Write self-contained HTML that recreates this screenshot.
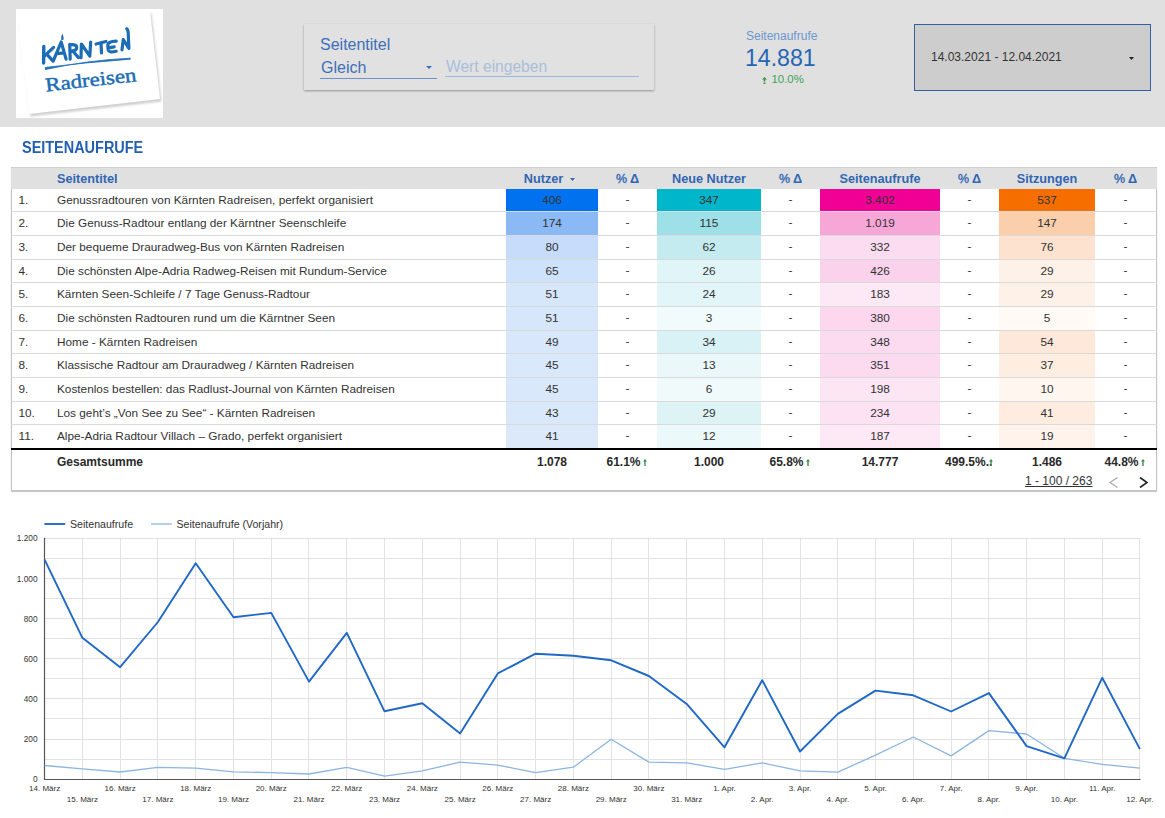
<!DOCTYPE html>
<html><head><meta charset="utf-8">
<style>
html,body{margin:0;padding:0;}
body{width:1165px;height:818px;overflow:hidden;position:relative;background:#fff;font-family:"Liberation Sans",sans-serif;}
.abs{position:absolute;}
#hdr{position:absolute;left:0;top:0;width:1165px;height:127px;background:#e0e0e0;}
#logo{position:absolute;left:16px;top:9px;width:147px;height:109px;background:#fff;}
#filter{position:absolute;left:304px;top:24px;width:350px;height:66px;background:#e1e1e1;box-shadow:0 1px 2px rgba(0,0,0,0.35);}
.ftxt{position:absolute;font-size:16px;color:#3d6fb8;white-space:nowrap;line-height:1;}
#date{position:absolute;left:914px;top:24px;width:235px;height:65px;background:#cdcdcd;border:1px solid #3460a3;}
.c{position:absolute;font-size:11.8px;line-height:22.67px;text-align:center;color:#333;white-space:nowrap;overflow:hidden;}
.c.l{text-align:left;}
.c.dash{line-height:20.6px;}
.c.idx{padding-left:7.5px;width:38px !important;}
.rowline{position:absolute;left:11px;width:1146px;height:1px;background:#dadada;}
.hd{position:absolute;top:168px;height:22px;line-height:22px;font-size:12.7px;font-weight:bold;color:#3166b3;white-space:nowrap;text-align:center;}
.tot{position:absolute;top:452px;line-height:20px;font-size:12px;font-weight:bold;color:#2a2a2a;white-space:nowrap;text-align:center;}
.pc{font-weight:normal;font-size:12.4px;-webkit-text-stroke:0.35px currentColor;}
.up{display:inline-block;vertical-align:0px;margin-left:4px;position:relative;left:-1.5px;}
svg text.ax{font-family:"Liberation Sans",sans-serif;font-size:8px;fill:#333;}
svg text.ay{font-family:"Liberation Sans",sans-serif;font-size:8.3px;fill:#333;}
svg text.lg{font-family:"Liberation Sans",sans-serif;font-size:10.6px;fill:#333;}
</style></head>
<body>
<div id="hdr"></div>
<div id="logo">
<svg width="147" height="109" viewBox="0 0 147 109">
 <defs><filter id="sh" x="-10%" y="-10%" width="120%" height="130%"><feGaussianBlur stdDeviation="1.2"/></filter></defs>
 <g transform="translate(-16,-9)">
  <polygon points="19,25 151,12 161,100 30,115" fill="#cfcfcf" filter="url(#sh)" transform="translate(0.5,1.5)"/>
  <polygon points="18,24 150,11 160,99 29,114" fill="#fff"/>
  <g fill="none" stroke="#1c6db5" stroke-linecap="round" stroke-linejoin="round" stroke-width="3.2">
   <path d="M43.8 46.4 L43.6 63" stroke-width="3.4"/>
   <path d="M44.3 56.2 L53.6 47.4 M46.7 54.2 L53.1 61.1"/>
   <path d="M53.6 60.1 L61.2 42 L66.1 59.1 M57 53.7 L64.3 52.8"/>
   <path d="M69.7 44.4 L70.2 59.1 M69.7 44.9 Q77.5 43.8 76.6 48.5 Q75.5 51 70.7 51.3 M72.6 50.8 L78.5 57.6"/>
   <path d="M81 57.6 L81.4 44 L89.8 56.2 L90.7 42"/>
   <path d="M96.1 44 L105.9 41.5 M101 43 L101.5 52.8"/>
   <path d="M116.2 41.2 Q108 41.5 107.8 45 L108.2 50 Q108.8 53 116.2 51.3 M108.5 47.9 L114.2 46.9"/>
   <path d="M122 49.8 L123.3 39.5 L128.9 48.4 L128.2 33 Q128 29.5 126.8 28.8"/>
  </g>
  <path d="M62.2 33.6 Q64.3 38 63.3 40 L61.3 40 Q60.5 38 62.2 33.6Z" fill="#1c6db5"/>
  <path d="M45.3 69.6 Q87.8 60 130.3 58.2 L130.3 59.2 Q87.8 62.3 45.3 67.4 Z" fill="#1c6db5" stroke="#1c6db5" stroke-width="0.8" stroke-linejoin="round"/>
  <g transform="rotate(-6.4 46 91.4)">
   <text x="46" y="91.4" font-family="Liberation Serif" font-size="19.5" fill="#1c6db5" stroke="#1c6db5" stroke-width="0.45" textLength="91.5" lengthAdjust="spacingAndGlyphs">Radreisen</text>
  </g>
 </g>
</svg>
</div>

<div id="filter">
 <div class="ftxt" style="left:16px;top:13px;">Seitentitel</div>
 <div class="ftxt" style="left:17px;top:36px;">Gleich</div>
 <div class="abs" style="left:16px;top:54px;width:117px;height:1px;background:#6f93c9;"></div>
 <svg class="abs" style="left:122px;top:42px" width="6" height="4"><path d="M0 0 L6 0 L3 3 Z" fill="#3d6fb8"/></svg>
 <div class="ftxt" style="left:142px;top:35px;color:#a9bfdc;font-size:15.6px;">Wert eingeben</div>
 <div class="abs" style="left:141px;top:52px;width:194px;height:1px;background:#9fb7d8;"></div>
</div>

<div class="abs" style="left:746px;top:30px;font-size:12px;color:#6b97d0;white-space:nowrap;line-height:1;">Seitenaufrufe</div>
<div class="abs" style="left:745px;top:47px;font-size:23.1px;color:#2465b5;white-space:nowrap;line-height:1;">14.881</div>
<svg class="abs" style="left:761.5px;top:77px" width="5" height="7" viewBox="0 0 5 7"><path d="M2.5 0 L5 2.6 L3.3 2.6 L3.3 4.6 L1.7 4.6 L1.7 2.6 L0 2.6Z M1.5 5.6 H3.5 V7 H1.5Z" fill="#3d8f4f"/></svg>
<div class="abs" style="left:771.5px;top:74px;font-size:11.4px;color:#43a058;white-space:nowrap;line-height:1;">10.0%</div>

<div id="date">
 <div class="abs" style="left:16px;top:26px;font-size:12px;color:#333;white-space:nowrap;line-height:1;">14.03.2021 - 12.04.2021</div>
 <svg class="abs" style="left:214px;top:32px" width="5" height="3"><path d="M0 0 L5 0 L2.5 3 Z" fill="#222"/></svg>
</div>

<div class="abs" style="left:22px;top:140px;font-size:16px;font-weight:bold;color:#2361b0;white-space:nowrap;line-height:1;transform:scaleX(0.903);transform-origin:left top;">SEITENAUFRUFE</div>

<!-- table -->
<div class="abs" style="left:11px;top:167px;width:1146px;height:324px;border:1px solid #c2c2c2;border-top:none;box-sizing:border-box;box-shadow:0 1px 1px rgba(0,0,0,0.2);"></div>
<div class="abs" style="left:11px;top:167px;width:1146px;height:22px;background:#e0e0e0;border-top:1px solid #cfcfcf;box-sizing:border-box;"></div>
<div class="hd" style="left:57px;">Seitentitel</div>
<div class="hd" style="left:504px;width:92px;"><span style="position:relative;left:-1px">Nutzer</span><svg width="5" height="3" style="vertical-align:2px;margin-left:6px"><path d="M0 0 L5 0 L2.5 3Z" fill="#3166b3"/></svg></div>
<div class="hd" style="left:598px;width:59px;"><span class="pc">%</span> Δ</div>
<div class="hd" style="left:657px;width:104px;">Neue Nutzer</div>
<div class="hd" style="left:761px;width:59px;"><span class="pc">%</span> Δ</div>
<div class="hd" style="left:820px;width:120px;">Seitenaufrufe</div>
<div class="hd" style="left:940px;width:59px;"><span class="pc">%</span> Δ</div>
<div class="hd" style="left:999px;width:96px;">Sitzungen</div>
<div class="hd" style="left:1095px;width:61px;"><span class="pc">%</span> Δ</div>
<div class="rowline" style="top:211.27px"></div>
<div class="c l idx" style="left:11px;top:188.60px;width:46px;height:22.67px;">1.</div>
<div class="c l" style="left:57px;top:188.60px;width:449px;height:22.67px;">Genussradtouren von Kärnten Radreisen, perfekt organisiert</div>
<div class="c " style="left:506px;top:188.60px;width:92px;height:22.67px;background:#0072f0;">406</div>
<div class="c dash" style="left:598px;top:188.60px;width:59px;height:22.67px;">-</div>
<div class="c " style="left:657px;top:188.60px;width:104px;height:22.67px;background:#00b6cb;">347</div>
<div class="c dash" style="left:761px;top:188.60px;width:59px;height:22.67px;">-</div>
<div class="c " style="left:820px;top:188.60px;width:120px;height:22.67px;background:#f10096;">3.402</div>
<div class="c dash" style="left:940px;top:188.60px;width:59px;height:22.67px;">-</div>
<div class="c " style="left:999px;top:188.60px;width:96px;height:22.67px;background:#f66d00;">537</div>
<div class="c dash" style="left:1095px;top:188.60px;width:61px;height:22.67px;">-</div>
<div class="rowline" style="top:234.94px"></div>
<div class="c l idx" style="left:11px;top:212.27px;width:46px;height:22.67px;">2.</div>
<div class="c l" style="left:57px;top:212.27px;width:449px;height:22.67px;">Die Genuss-Radtour entlang der Kärntner Seenschleife</div>
<div class="c " style="left:506px;top:212.27px;width:92px;height:22.67px;background:#8ab9f6;">174</div>
<div class="c dash" style="left:598px;top:212.27px;width:59px;height:22.67px;">-</div>
<div class="c " style="left:657px;top:212.27px;width:104px;height:22.67px;background:#9de0e8;">115</div>
<div class="c dash" style="left:761px;top:212.27px;width:59px;height:22.67px;">-</div>
<div class="c " style="left:820px;top:212.27px;width:120px;height:22.67px;background:#f7a6d8;">1.019</div>
<div class="c dash" style="left:940px;top:212.27px;width:59px;height:22.67px;">-</div>
<div class="c " style="left:999px;top:212.27px;width:96px;height:22.67px;background:#fbcfac;">147</div>
<div class="c dash" style="left:1095px;top:212.27px;width:61px;height:22.67px;">-</div>
<div class="rowline" style="top:258.61px"></div>
<div class="c l idx" style="left:11px;top:235.94px;width:46px;height:22.67px;">3.</div>
<div class="c l" style="left:57px;top:235.94px;width:449px;height:22.67px;">Der bequeme Drauradweg-Bus von Kärnten Radreisen</div>
<div class="c " style="left:506px;top:235.94px;width:92px;height:22.67px;background:#c6dcfa;">80</div>
<div class="c dash" style="left:598px;top:235.94px;width:59px;height:22.67px;">-</div>
<div class="c " style="left:657px;top:235.94px;width:104px;height:22.67px;background:#c4ecf0;">62</div>
<div class="c dash" style="left:761px;top:235.94px;width:59px;height:22.67px;">-</div>
<div class="c " style="left:820px;top:235.94px;width:120px;height:22.67px;background:#fcdcf0;">332</div>
<div class="c dash" style="left:940px;top:235.94px;width:59px;height:22.67px;">-</div>
<div class="c " style="left:999px;top:235.94px;width:96px;height:22.67px;background:#fde3cf;">76</div>
<div class="c dash" style="left:1095px;top:235.94px;width:61px;height:22.67px;">-</div>
<div class="rowline" style="top:282.28px"></div>
<div class="c l idx" style="left:11px;top:259.61px;width:46px;height:22.67px;">4.</div>
<div class="c l" style="left:57px;top:259.61px;width:449px;height:22.67px;">Die schönsten Alpe-Adria Radweg-Reisen mit Rundum-Service</div>
<div class="c " style="left:506px;top:259.61px;width:92px;height:22.67px;background:#cfe2fb;">65</div>
<div class="c dash" style="left:598px;top:259.61px;width:59px;height:22.67px;">-</div>
<div class="c " style="left:657px;top:259.61px;width:104px;height:22.67px;background:#e0f5f7;">26</div>
<div class="c dash" style="left:761px;top:259.61px;width:59px;height:22.67px;">-</div>
<div class="c " style="left:820px;top:259.61px;width:120px;height:22.67px;background:#fbd2ec;">426</div>
<div class="c dash" style="left:940px;top:259.61px;width:59px;height:22.67px;">-</div>
<div class="c " style="left:999px;top:259.61px;width:96px;height:22.67px;background:#fef1e7;">29</div>
<div class="c dash" style="left:1095px;top:259.61px;width:61px;height:22.67px;">-</div>
<div class="rowline" style="top:305.95px"></div>
<div class="c l idx" style="left:11px;top:283.28px;width:46px;height:22.67px;">5.</div>
<div class="c l" style="left:57px;top:283.28px;width:449px;height:22.67px;">Kärnten Seen-Schleife / 7 Tage Genuss-Radtour</div>
<div class="c " style="left:506px;top:283.28px;width:92px;height:22.67px;background:#d6e6fb;">51</div>
<div class="c dash" style="left:598px;top:283.28px;width:59px;height:22.67px;">-</div>
<div class="c " style="left:657px;top:283.28px;width:104px;height:22.67px;background:#e2f5f8;">24</div>
<div class="c dash" style="left:761px;top:283.28px;width:59px;height:22.67px;">-</div>
<div class="c " style="left:820px;top:283.28px;width:120px;height:22.67px;background:#fde8f5;">183</div>
<div class="c dash" style="left:940px;top:283.28px;width:59px;height:22.67px;">-</div>
<div class="c " style="left:999px;top:283.28px;width:96px;height:22.67px;background:#fef1e7;">29</div>
<div class="c dash" style="left:1095px;top:283.28px;width:61px;height:22.67px;">-</div>
<div class="rowline" style="top:329.62px"></div>
<div class="c l idx" style="left:11px;top:306.95px;width:46px;height:22.67px;">6.</div>
<div class="c l" style="left:57px;top:306.95px;width:449px;height:22.67px;">Die schönsten Radtouren rund um die Kärntner Seen</div>
<div class="c " style="left:506px;top:306.95px;width:92px;height:22.67px;background:#d6e6fb;">51</div>
<div class="c dash" style="left:598px;top:306.95px;width:59px;height:22.67px;">-</div>
<div class="c " style="left:657px;top:306.95px;width:104px;height:22.67px;background:#f2fbfc;">3</div>
<div class="c dash" style="left:761px;top:306.95px;width:59px;height:22.67px;">-</div>
<div class="c " style="left:820px;top:306.95px;width:120px;height:22.67px;background:#fcd7ee;">380</div>
<div class="c dash" style="left:940px;top:306.95px;width:59px;height:22.67px;">-</div>
<div class="c " style="left:999px;top:306.95px;width:96px;height:22.67px;background:#fffaf6;">5</div>
<div class="c dash" style="left:1095px;top:306.95px;width:61px;height:22.67px;">-</div>
<div class="rowline" style="top:353.29px"></div>
<div class="c l idx" style="left:11px;top:330.62px;width:46px;height:22.67px;">7.</div>
<div class="c l" style="left:57px;top:330.62px;width:449px;height:22.67px;">Home - Kärnten Radreisen</div>
<div class="c " style="left:506px;top:330.62px;width:92px;height:22.67px;background:#d8e7fb;">49</div>
<div class="c dash" style="left:598px;top:330.62px;width:59px;height:22.67px;">-</div>
<div class="c " style="left:657px;top:330.62px;width:104px;height:22.67px;background:#d8f2f5;">34</div>
<div class="c dash" style="left:761px;top:330.62px;width:59px;height:22.67px;">-</div>
<div class="c " style="left:820px;top:330.62px;width:120px;height:22.67px;background:#fcdaf0;">348</div>
<div class="c dash" style="left:940px;top:330.62px;width:59px;height:22.67px;">-</div>
<div class="c " style="left:999px;top:330.62px;width:96px;height:22.67px;background:#fde8d9;">54</div>
<div class="c dash" style="left:1095px;top:330.62px;width:61px;height:22.67px;">-</div>
<div class="rowline" style="top:376.96px"></div>
<div class="c l idx" style="left:11px;top:354.29px;width:46px;height:22.67px;">8.</div>
<div class="c l" style="left:57px;top:354.29px;width:449px;height:22.67px;">Klassische Radtour am Drauradweg / Kärnten Radreisen</div>
<div class="c " style="left:506px;top:354.29px;width:92px;height:22.67px;background:#d9e8fb;">45</div>
<div class="c dash" style="left:598px;top:354.29px;width:59px;height:22.67px;">-</div>
<div class="c " style="left:657px;top:354.29px;width:104px;height:22.67px;background:#ebf8fa;">13</div>
<div class="c dash" style="left:761px;top:354.29px;width:59px;height:22.67px;">-</div>
<div class="c " style="left:820px;top:354.29px;width:120px;height:22.67px;background:#fcdaf0;">351</div>
<div class="c dash" style="left:940px;top:354.29px;width:59px;height:22.67px;">-</div>
<div class="c " style="left:999px;top:354.29px;width:96px;height:22.67px;background:#feeee2;">37</div>
<div class="c dash" style="left:1095px;top:354.29px;width:61px;height:22.67px;">-</div>
<div class="rowline" style="top:400.63px"></div>
<div class="c l idx" style="left:11px;top:377.96px;width:46px;height:22.67px;">9.</div>
<div class="c l" style="left:57px;top:377.96px;width:449px;height:22.67px;">Kostenlos bestellen: das Radlust-Journal von Kärnten Radreisen</div>
<div class="c " style="left:506px;top:377.96px;width:92px;height:22.67px;background:#d9e8fb;">45</div>
<div class="c dash" style="left:598px;top:377.96px;width:59px;height:22.67px;">-</div>
<div class="c " style="left:657px;top:377.96px;width:104px;height:22.67px;background:#f0fafb;">6</div>
<div class="c dash" style="left:761px;top:377.96px;width:59px;height:22.67px;">-</div>
<div class="c " style="left:820px;top:377.96px;width:120px;height:22.67px;background:#fde6f4;">198</div>
<div class="c dash" style="left:940px;top:377.96px;width:59px;height:22.67px;">-</div>
<div class="c " style="left:999px;top:377.96px;width:96px;height:22.67px;background:#fff6f0;">10</div>
<div class="c dash" style="left:1095px;top:377.96px;width:61px;height:22.67px;">-</div>
<div class="rowline" style="top:424.30px"></div>
<div class="c l idx" style="left:11px;top:401.63px;width:46px;height:22.67px;">10.</div>
<div class="c l" style="left:57px;top:401.63px;width:449px;height:22.67px;">Los geht’s „Von See zu See“ - Kärnten Radreisen</div>
<div class="c " style="left:506px;top:401.63px;width:92px;height:22.67px;background:#dae8fb;">43</div>
<div class="c dash" style="left:598px;top:401.63px;width:59px;height:22.67px;">-</div>
<div class="c " style="left:657px;top:401.63px;width:104px;height:22.67px;background:#ddf3f6;">29</div>
<div class="c dash" style="left:761px;top:401.63px;width:59px;height:22.67px;">-</div>
<div class="c " style="left:820px;top:401.63px;width:120px;height:22.67px;background:#fde2f3;">234</div>
<div class="c dash" style="left:940px;top:401.63px;width:59px;height:22.67px;">-</div>
<div class="c " style="left:999px;top:401.63px;width:96px;height:22.67px;background:#fdecdf;">41</div>
<div class="c dash" style="left:1095px;top:401.63px;width:61px;height:22.67px;">-</div>
<div class="rowline" style="top:447.97px"></div>
<div class="c l idx" style="left:11px;top:425.30px;width:46px;height:22.67px;">11.</div>
<div class="c l" style="left:57px;top:425.30px;width:449px;height:22.67px;">Alpe-Adria Radtour Villach – Grado, perfekt organisiert</div>
<div class="c " style="left:506px;top:425.30px;width:92px;height:22.67px;background:#dbe9fb;">41</div>
<div class="c dash" style="left:598px;top:425.30px;width:59px;height:22.67px;">-</div>
<div class="c " style="left:657px;top:425.30px;width:104px;height:22.67px;background:#ecf9fa;">12</div>
<div class="c dash" style="left:761px;top:425.30px;width:59px;height:22.67px;">-</div>
<div class="c " style="left:820px;top:425.30px;width:120px;height:22.67px;background:#fde8f5;">187</div>
<div class="c dash" style="left:940px;top:425.30px;width:59px;height:22.67px;">-</div>
<div class="c " style="left:999px;top:425.30px;width:96px;height:22.67px;background:#fff3eb;">19</div>
<div class="c dash" style="left:1095px;top:425.30px;width:61px;height:22.67px;">-</div>
<div class="abs" style="left:11px;top:448px;width:1146px;height:2px;background:#000;"></div>
<div class="tot" style="left:57px;text-align:left;">Gesamtsumme</div>
<div class="tot" style="left:506px;width:92px;">1.078</div>
<div class="tot" style="left:598px;width:59px;">61.1%<svg class="up" width="4" height="7" viewBox="0 0 4 7"><path d="M2 0 L4 2.5 L2.7 2.5 L2.7 7 L1.3 7 L1.3 2.5 L0 2.5Z" fill="#3d8b4f"/></svg></div>
<div class="tot" style="left:657px;width:104px;">1.000</div>
<div class="tot" style="left:761px;width:59px;">65.8%<svg class="up" width="4" height="7" viewBox="0 0 4 7"><path d="M2 0 L4 2.5 L2.7 2.5 L2.7 7 L1.3 7 L1.3 2.5 L0 2.5Z" fill="#3d8b4f"/></svg></div>
<div class="tot" style="left:820px;width:120px;">14.777</div>
<div class="tot" style="left:945px;text-align:left;">499.5%..<svg width="4" height="7" viewBox="0 0 4 7" style="vertical-align:0px;margin-left:-3px"><path d="M2 0 L4 2.5 L2.7 2.5 L2.7 7 L1.3 7 L1.3 2.5 L0 2.5Z" fill="#3d8b4f"/></svg></div>
<div class="tot" style="left:999px;width:96px;">1.486</div>
<div class="tot" style="left:1095px;width:61px;">44.8%<svg class="up" width="4" height="7" viewBox="0 0 4 7"><path d="M2 0 L4 2.5 L2.7 2.5 L2.7 7 L1.3 7 L1.3 2.5 L0 2.5Z" fill="#3d8b4f"/></svg></div>
<div class="abs" style="left:1025px;top:474px;font-size:12px;color:#333;white-space:nowrap;line-height:14px;text-decoration:underline;">1 - 100 / 263</div>
<svg class="abs" style="left:1108px;top:476px" width="12" height="12"><path d="M9.5 1.5 L2 6.5 L9.5 11.5" stroke="#aaa" stroke-width="1.3" fill="none"/></svg>
<svg class="abs" style="left:1138px;top:476px" width="12" height="12"><path d="M2 1.5 L9 6.5 L2 11.5" stroke="#222" stroke-width="1.6" fill="none"/></svg>

<svg class="abs" style="left:0;top:0" width="1165" height="818">
<line x1="44.6" y1="759.5" x2="1140.4" y2="759.5" stroke="#e2e2e2" stroke-width="1"/>
<line x1="44.6" y1="739.5" x2="1140.4" y2="739.5" stroke="#e2e2e2" stroke-width="1"/>
<line x1="44.6" y1="718.5" x2="1140.4" y2="718.5" stroke="#e2e2e2" stroke-width="1"/>
<line x1="44.6" y1="698.5" x2="1140.4" y2="698.5" stroke="#e2e2e2" stroke-width="1"/>
<line x1="44.6" y1="678.5" x2="1140.4" y2="678.5" stroke="#e2e2e2" stroke-width="1"/>
<line x1="44.6" y1="658.5" x2="1140.4" y2="658.5" stroke="#e2e2e2" stroke-width="1"/>
<line x1="44.6" y1="638.5" x2="1140.4" y2="638.5" stroke="#e2e2e2" stroke-width="1"/>
<line x1="44.6" y1="618.5" x2="1140.4" y2="618.5" stroke="#e2e2e2" stroke-width="1"/>
<line x1="44.6" y1="598.5" x2="1140.4" y2="598.5" stroke="#e2e2e2" stroke-width="1"/>
<line x1="44.6" y1="578.5" x2="1140.4" y2="578.5" stroke="#e2e2e2" stroke-width="1"/>
<line x1="44.6" y1="558.5" x2="1140.4" y2="558.5" stroke="#e2e2e2" stroke-width="1"/>
<line x1="44.6" y1="538.5" x2="1140.4" y2="538.5" stroke="#e2e2e2" stroke-width="1"/>
<line x1="82.5" y1="538.2" x2="82.5" y2="779.2" stroke="#e2e2e2" stroke-width="1"/>
<line x1="120.5" y1="538.2" x2="120.5" y2="779.2" stroke="#e2e2e2" stroke-width="1"/>
<line x1="157.5" y1="538.2" x2="157.5" y2="779.2" stroke="#e2e2e2" stroke-width="1"/>
<line x1="195.5" y1="538.2" x2="195.5" y2="779.2" stroke="#e2e2e2" stroke-width="1"/>
<line x1="233.5" y1="538.2" x2="233.5" y2="779.2" stroke="#e2e2e2" stroke-width="1"/>
<line x1="271.5" y1="538.2" x2="271.5" y2="779.2" stroke="#e2e2e2" stroke-width="1"/>
<line x1="308.5" y1="538.2" x2="308.5" y2="779.2" stroke="#e2e2e2" stroke-width="1"/>
<line x1="346.5" y1="538.2" x2="346.5" y2="779.2" stroke="#e2e2e2" stroke-width="1"/>
<line x1="384.5" y1="538.2" x2="384.5" y2="779.2" stroke="#e2e2e2" stroke-width="1"/>
<line x1="422.5" y1="538.2" x2="422.5" y2="779.2" stroke="#e2e2e2" stroke-width="1"/>
<line x1="460.5" y1="538.2" x2="460.5" y2="779.2" stroke="#e2e2e2" stroke-width="1"/>
<line x1="497.5" y1="538.2" x2="497.5" y2="779.2" stroke="#e2e2e2" stroke-width="1"/>
<line x1="535.5" y1="538.2" x2="535.5" y2="779.2" stroke="#e2e2e2" stroke-width="1"/>
<line x1="573.5" y1="538.2" x2="573.5" y2="779.2" stroke="#e2e2e2" stroke-width="1"/>
<line x1="611.5" y1="538.2" x2="611.5" y2="779.2" stroke="#e2e2e2" stroke-width="1"/>
<line x1="648.5" y1="538.2" x2="648.5" y2="779.2" stroke="#e2e2e2" stroke-width="1"/>
<line x1="686.5" y1="538.2" x2="686.5" y2="779.2" stroke="#e2e2e2" stroke-width="1"/>
<line x1="724.5" y1="538.2" x2="724.5" y2="779.2" stroke="#e2e2e2" stroke-width="1"/>
<line x1="762.5" y1="538.2" x2="762.5" y2="779.2" stroke="#e2e2e2" stroke-width="1"/>
<line x1="800.5" y1="538.2" x2="800.5" y2="779.2" stroke="#e2e2e2" stroke-width="1"/>
<line x1="837.5" y1="538.2" x2="837.5" y2="779.2" stroke="#e2e2e2" stroke-width="1"/>
<line x1="875.5" y1="538.2" x2="875.5" y2="779.2" stroke="#e2e2e2" stroke-width="1"/>
<line x1="913.5" y1="538.2" x2="913.5" y2="779.2" stroke="#e2e2e2" stroke-width="1"/>
<line x1="951.5" y1="538.2" x2="951.5" y2="779.2" stroke="#e2e2e2" stroke-width="1"/>
<line x1="988.5" y1="538.2" x2="988.5" y2="779.2" stroke="#e2e2e2" stroke-width="1"/>
<line x1="1026.5" y1="538.2" x2="1026.5" y2="779.2" stroke="#e2e2e2" stroke-width="1"/>
<line x1="1064.5" y1="538.2" x2="1064.5" y2="779.2" stroke="#e2e2e2" stroke-width="1"/>
<line x1="1102.5" y1="538.2" x2="1102.5" y2="779.2" stroke="#e2e2e2" stroke-width="1"/>
<line x1="1139.5" y1="538.2" x2="1139.5" y2="779.2" stroke="#e2e2e2" stroke-width="1"/>
<line x1="44.5" y1="538" x2="44.5" y2="780" stroke="#555" stroke-width="1.2"/>
<line x1="44" y1="779.5" x2="1140.5" y2="779.5" stroke="#555" stroke-width="1.2"/>
<polyline points="44.6,765.5 82.4,768.8 120.1,772.0 157.9,767.4 195.7,768.2 233.5,771.8 271.2,772.6 309.0,774.0 346.8,767.4 384.5,776.2 422.3,770.8 460.1,762.1 497.8,765.1 535.6,772.6 573.4,767.2 611.2,739.2 648.9,762.1 686.7,762.9 724.5,769.4 762.2,762.9 800.0,770.8 837.8,772.2 875.5,755.1 913.3,737.0 951.1,755.9 988.9,730.6 1026.6,734.0 1064.4,758.3 1102.2,764.3 1139.9,768.2" fill="none" stroke="#8db5e2" stroke-width="1.3" stroke-linejoin="round"/>
<polyline points="44.6,559.7 82.4,637.8 120.1,667.2 157.9,622.0 195.7,563.3 233.5,617.2 271.2,612.9 309.0,681.6 346.8,632.8 384.5,711.3 422.3,703.3 460.1,733.4 497.8,673.4 535.6,653.7 573.4,655.7 611.2,660.3 648.9,676.0 686.7,703.9 724.5,747.3 762.2,680.2 800.0,751.5 837.8,713.9 875.5,690.6 913.3,695.3 951.1,711.5 988.9,693.1 1026.6,746.1 1064.4,758.3 1102.2,677.8 1139.9,749.1" fill="none" stroke="#1f68c6" stroke-width="1.9" stroke-linejoin="round"/>
<text x="37.5" y="782.3" text-anchor="end" class="ay">0</text>
<text x="37.5" y="742.1" text-anchor="end" class="ay">200</text>
<text x="37.5" y="702.0" text-anchor="end" class="ay">400</text>
<text x="37.5" y="661.8" text-anchor="end" class="ay">600</text>
<text x="37.5" y="621.7" text-anchor="end" class="ay">800</text>
<text x="37.5" y="581.5" text-anchor="end" class="ay">1.000</text>
<text x="37.5" y="541.3" text-anchor="end" class="ay">1.200</text>
<text x="44.6" y="791" text-anchor="middle" class="ax">14. März</text>
<text x="82.4" y="802" text-anchor="middle" class="ax">15. März</text>
<text x="120.1" y="791" text-anchor="middle" class="ax">16. März</text>
<text x="157.9" y="802" text-anchor="middle" class="ax">17. März</text>
<text x="195.7" y="791" text-anchor="middle" class="ax">18. März</text>
<text x="233.5" y="802" text-anchor="middle" class="ax">19. März</text>
<text x="271.2" y="791" text-anchor="middle" class="ax">20. März</text>
<text x="309.0" y="802" text-anchor="middle" class="ax">21. März</text>
<text x="346.8" y="791" text-anchor="middle" class="ax">22. März</text>
<text x="384.5" y="802" text-anchor="middle" class="ax">23. März</text>
<text x="422.3" y="791" text-anchor="middle" class="ax">24. März</text>
<text x="460.1" y="802" text-anchor="middle" class="ax">25. März</text>
<text x="497.8" y="791" text-anchor="middle" class="ax">26. März</text>
<text x="535.6" y="802" text-anchor="middle" class="ax">27. März</text>
<text x="573.4" y="791" text-anchor="middle" class="ax">28. März</text>
<text x="611.2" y="802" text-anchor="middle" class="ax">29. März</text>
<text x="648.9" y="791" text-anchor="middle" class="ax">30. März</text>
<text x="686.7" y="802" text-anchor="middle" class="ax">31. März</text>
<text x="724.5" y="791" text-anchor="middle" class="ax">1. Apr.</text>
<text x="762.2" y="802" text-anchor="middle" class="ax">2. Apr.</text>
<text x="800.0" y="791" text-anchor="middle" class="ax">3. Apr.</text>
<text x="837.8" y="802" text-anchor="middle" class="ax">4. Apr.</text>
<text x="875.5" y="791" text-anchor="middle" class="ax">5. Apr.</text>
<text x="913.3" y="802" text-anchor="middle" class="ax">6. Apr.</text>
<text x="951.1" y="791" text-anchor="middle" class="ax">7. Apr.</text>
<text x="988.9" y="802" text-anchor="middle" class="ax">8. Apr.</text>
<text x="1026.6" y="791" text-anchor="middle" class="ax">9. Apr.</text>
<text x="1064.4" y="802" text-anchor="middle" class="ax">10. Apr.</text>
<text x="1102.2" y="791" text-anchor="middle" class="ax">11. Apr.</text>
<text x="1139.9" y="802" text-anchor="middle" class="ax">12. Apr.</text>
<line x1="44.4" y1="524" x2="65.2" y2="524" stroke="#1f68c6" stroke-width="1.9"/>
<text x="70" y="527.6" class="lg">Seitenaufrufe</text>
<line x1="151" y1="524" x2="171.8" y2="524" stroke="#8db5e2" stroke-width="1.3"/>
<text x="176.5" y="527.6" class="lg">Seitenaufrufe (Vorjahr)</text>
</svg>
</body></html>
